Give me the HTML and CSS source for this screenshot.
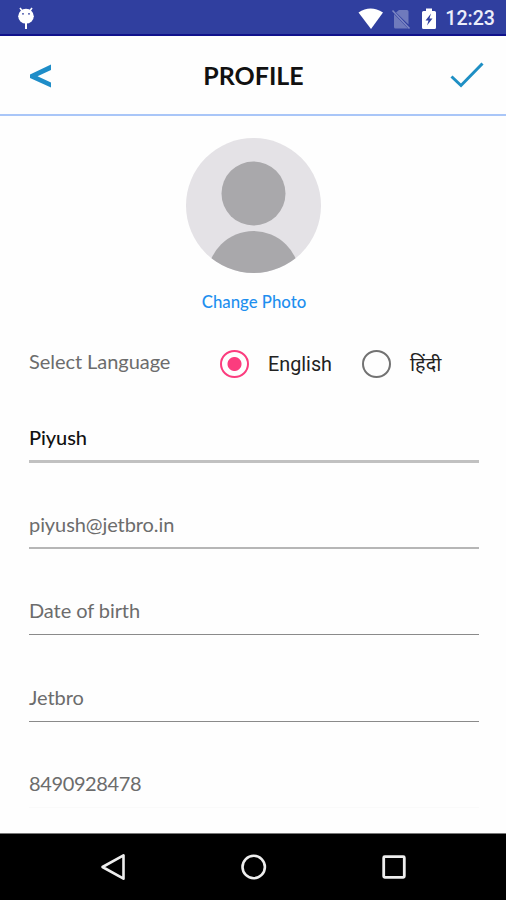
FILE: index.html
```html
<!DOCTYPE html>
<html lang="en">
<head>
  <meta charset="UTF-8">
  <meta name="viewport" content="width=device-width, initial-scale=1.0">
  <title>Profile</title>
  <link rel="stylesheet" href="styles.css">
</head>
<body>
  <div class="status-bar">
    <svg class="debug-icon" width="18" height="24" viewBox="0 0 18 24">
      <path d="M3 2l3 4M15 2l-3 4" stroke="#fff" stroke-width="1.6"/>
      <ellipse cx="9" cy="10.2" rx="7.8" ry="7.4" fill="#fff"/>
      <path d="M9 16v7" stroke="#fff" stroke-width="2"/>
      <circle cx="6" cy="7.8" r="0.9" fill="#303f9f"/>
      <circle cx="12" cy="7.8" r="0.9" fill="#303f9f"/>
    </svg>
    <div class="status-icons">
      <svg width="26" height="22" viewBox="0 0 26 22">
        <path d="M0.5 4.5Q12.5-3.5 25 4.5L13 21z" fill="#fff"/>
      </svg>
      <svg class="sim" width="20" height="22" viewBox="0 0 20 22">
        <path d="M3 6L17 20.500H4.500Q3 20.500 3 19zM8 2h8q1.500 0 1.500 1.500v13L5 4.500z" fill="#6f7abc"/>
        <path d="M1.500 2.500L18.500 20.500" stroke="#7f89c4" stroke-width="1.500"/>
      </svg>
      <svg class="battery" width="14" height="22" viewBox="0 0 14 22">
        <path d="M4 0.500h6v2.500h2.500q1.500 0 1.500 1.500v15q0 1.500-1.500 1.500h-11q-1.500 0-1.500-1.500v-15q0-1.500 1.500-1.500h2.500z" fill="#fff"/>
        <path d="M9 5.500L3.500 12.500h3L5 17.500L10.500 10.500H7.500z" fill="#303f9f"/>
      </svg>
      <span class="clock">12:23</span>
    </div>
  </div>

  <div class="header">
    <svg class="back" width="24" height="26" viewBox="0 0 24 26">
      <path d="M22 0.500v5.500L8.500 12.300L22 18.500v5L1 14v-3.500z" fill="#1e8dc8"/>
    </svg>
    <h1>PROFILE</h1>
    <svg class="done" width="34" height="26" viewBox="0 0 34 26">
      <path d="M1.500 14.500L11 23.500L32.500 1.500" fill="none" stroke="#1e8fc4" stroke-width="3"/>
    </svg>
  </div>

  <div class="content">
    <div class="photo">
      <svg width="136" height="136" viewBox="0 0 136 136">
        <clipPath id="avatar-clip"><circle cx="67.5" cy="67.5" r="67.5"/></clipPath>
        <g clip-path="url(#avatar-clip)">
          <rect width="136" height="136" fill="#e4e2e6"/>
          <circle cx="67.5" cy="55.5" r="32" fill="#a9a8ab"/>
          <circle cx="67.5" cy="139" r="46" fill="#a9a8ab"/>
        </g>
      </svg>
      <a class="change-photo">Change Photo</a>
    </div>

    <div class="language">
      <span class="language-label">Select Language</span>
      <span class="radio checked"></span>
      <span class="option english">English</span>
      <span class="radio"></span>
      <span class="option hindi" lang="hi">हिंदी</span>
    </div>

    <div class="field name"><span>Piyush</span></div>
    <div class="field email"><span>piyush@jetbro.in</span></div>
    <div class="field"><span>Date of birth</span></div>
    <div class="field"><span>Jetbro</span></div>
    <div class="field phone"><span>8490928478</span></div>
  </div>

  <div class="nav-bar">
    <svg width="28" height="28" viewBox="0 0 28 28">
      <path d="M3.500 14L24.500 2.300V25.700z" fill="none" stroke="#eee" stroke-width="2.600" stroke-linejoin="round"/>
    </svg>
    <svg width="28" height="28" viewBox="0 0 28 28">
      <circle cx="13.7" cy="14" r="11.2" fill="none" stroke="#eee" stroke-width="2.600"/>
    </svg>
    <svg width="28" height="28" viewBox="0 0 28 28">
      <rect x="3.700" y="3.700" width="20.600" height="20.600" rx="1" fill="none" stroke="#eee" stroke-width="2.800"/>
    </svg>
  </div>
</body>
</html>
```
FILE: styles.css
```css
* {
  box-sizing: border-box;
}

body {
  margin: 0;
  height: 900px;
  display: flex;
  flex-direction: column;
  overflow: hidden;
  background: #fefefe;
  font-family: Lato, "Noto Sans", sans-serif;
  color: #6c6c6c;
}

svg {
  display: block;
  flex-shrink: 0;
}

.status-bar {
  height: 36px;
  display: flex;
  justify-content: space-between;
  align-items: flex-start;
  padding: 6px 11px 0 17px;
  background: #303f9f;
  border-bottom: 2px solid #10128c;
}

.status-icons {
  display: flex;
  align-items: center;
  padding-top: 1px;
}

.sim {
  margin-left: 7px;
}

.battery {
  margin-left: 11px;
}

.clock {
  margin-left: 9px;
  padding-top: 1px;
  font: 500 19.6px/22px Roboto, sans-serif;
  color: #eceefa;
}

.header {
  height: 80px;
  display: flex;
  justify-content: space-between;
  align-items: center;
  padding: 0 22px 0 29px;
  border-bottom: 2px solid #a9c6f8;
}

.header h1 {
  margin: 0 0 0 4px;
  font-size: 25px;
  font-weight: 700;
  color: #111;
}

.back {
  margin-top: 4px;
}

.content {
  flex: 1;
  padding: 22px 27px 0 29px;
}

.photo {
  display: flex;
  flex-direction: column;
  align-items: center;
}

.change-photo {
  margin-top: 17px;
  font-size: 16.8px;
  line-height: 22px;
  font-weight: 500;
  color: #1e8fef;
}

.language {
  height: 50px;
  margin-top: 26px;
  display: flex;
  align-items: center;
}

.language-label {
  width: 191px;
  padding-bottom: 6px;
  font-size: 20px;
  letter-spacing: -0.05px;
}

.radio {
  width: 29px;
  height: 28px;
  border: 2.5px solid #727272;
  border-radius: 50%;
}

.radio.checked {
  border-color: #fb3c7e;
  background: radial-gradient(circle, #fb3c7e 6.5px, transparent 7.5px);
}

.option {
  padding-top: 1px;
  font: 19.8px/28px Roboto, "Noto Sans", sans-serif;
  color: #222;
}

.english {
  width: 94px;
  margin-left: 19px;
}

.hindi {
  margin-left: 19px;
}

.field {
  height: 86.4px;
  border-bottom: 1.5px solid #8a8a8a;
  display: flex;
  align-items: flex-end;
  padding-bottom: 12px;
  font-size: 20px;
  line-height: 24px;
  letter-spacing: -0.08px;
}

.field.name {
  height: 74px;
  border-bottom: 3px solid #c1c1c1;
  padding-bottom: 11px;
  font-weight: 500;
  color: #111;
}

.field.email {
  height: 86px;
  border-bottom: 2px solid #b6b6b6;
  padding-bottom: 11px;
}

.field.phone {
  border-bottom-color: #fafafa;
  letter-spacing: -0.38px;
}

.nav-bar {
  height: 67px;
  display: flex;
  justify-content: space-between;
  align-items: center;
  padding: 0 98px 0 99px;
  background: #000;
  border-top: 1px solid #777;
}
```
